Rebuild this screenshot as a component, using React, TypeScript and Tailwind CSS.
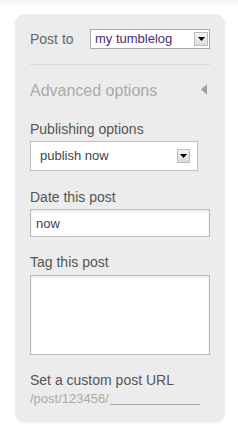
import React from 'react';

const Arrow = ({ size }: { size: 'sm' | 'md' }) => (
  <span
    className={`flex items-center justify-center border border-[#bdbdbd] bg-[linear-gradient(#f4f4f4,#dcdcdc)] ${
      size === 'sm' ? 'w-[14px] h-[14px]' : 'w-[13px] h-[14px]'
    }`}
  >
    <svg width="7" height="4" viewBox="0 0 7 4">
      <path d="M0 0 L7 0 L3.5 4 Z" fill="#000" />
    </svg>
  </span>
);

const App = () => {
  return (
    <div className="w-[238px] h-[435px] bg-[linear-gradient(#f2f2f2,#ffffff_6px)] pt-[14px] pl-[15px] font-['Liberation_Sans',Arial,sans-serif]">
      <div className="w-[210px] h-[408px] rounded-[10px] bg-[#ececec] shadow-[0_1px_2px_rgba(0,0,0,0.08)] px-[15px] pt-[15px]">
        <div className="flex items-center h-[20px]">
          <span className="text-[14px] leading-[18px] text-[#666]">Post to</span>
          <div className="ml-auto w-[120px] h-[20px] border border-[#aaa] bg-white flex items-center pl-[4px] pr-[1px]">
            <span className="text-[13px] leading-[16px] text-[#43306a]">my tumblelog</span>
            <span className="ml-auto"><Arrow size="sm" /></span>
          </div>
        </div>

        <div className="mt-[15px] h-px bg-[#d9d9d9]" />

        <div className="mt-[16px] flex items-start justify-between">
          <span className="text-[16px] leading-[20px] text-[#aaa]">Advanced options</span>
          <svg className="mt-[3px] mr-[3px]" width="6" height="11" viewBox="0 0 6 11">
            <path d="M6 0 L0 5.5 L6 11 Z" fill="#a0a0a0" />
          </svg>
        </div>

        <div className="mt-[19px] text-[14px] leading-[18px] text-[#555]">Publishing options</div>
        <div className="mt-[3px] w-[168px] h-[30px] border border-[#bfbfbf] bg-white flex items-center pl-[9px] pr-[7px]">
          <span className="text-[13px] leading-[18px] text-[#444]">publish now</span>
          <span className="ml-auto"><Arrow size="md" /></span>
        </div>

        <div className="mt-[17px] text-[14px] leading-[18px] text-[#555]">Date this post</div>
        <input
          readOnly
          value="now"
          className="mt-[3px] block w-[180px] h-[28px] border border-[#bbb] bg-white px-[5px] text-[13px] text-[#444] shadow-[inset_0_2px_3px_rgba(0,0,0,0.08)] outline-none font-['Liberation_Sans',Arial,sans-serif]"
        />

        <div className="mt-[16px] text-[14px] leading-[18px] text-[#555]">Tag this post</div>
        <textarea
          readOnly
          className="mt-[4px] block w-[180px] h-[80px] border border-[#bbb] bg-white resize-none shadow-[inset_0_2px_3px_rgba(0,0,0,0.08)] outline-none"
        />

        <div className="mt-[16px] text-[14px] leading-[18px] text-[#555]">Set a custom post URL</div>
        <div className="mt-[2px] flex items-start">
          <span className="text-[13px] leading-[16px] text-[#aaa]">/post/123456/</span>
          <span className="ml-[1px] w-[90px] h-[14px] border-b border-[#aaa]" />
        </div>
      </div>
    </div>
  );
};

export default App;
